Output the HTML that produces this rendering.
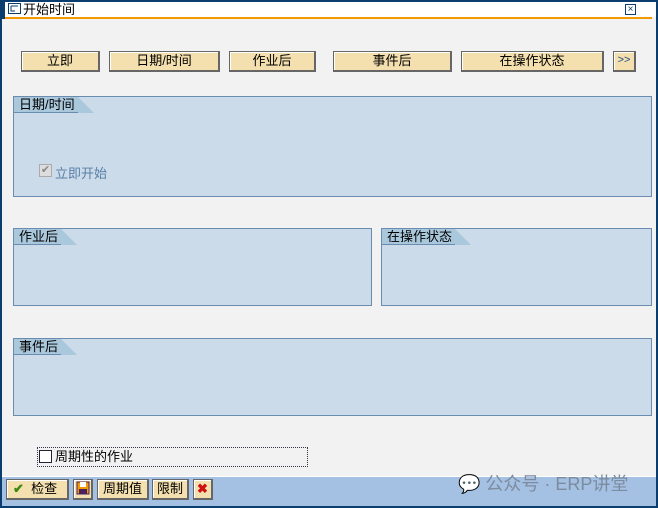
<!DOCTYPE html>
<html><head><meta charset="utf-8"><style>
*{box-sizing:border-box;margin:0;padding:0}
body{width:658px;height:508px;position:relative;overflow:hidden;background:#f2f2f2;font-family:"Liberation Sans","Noto Sans CJK SC",sans-serif;font-size:13px;color:#000}
.a{position:absolute}
.btn{position:absolute;background:#f4e0ae;border:1px solid #666;border-right:2px solid #666;border-bottom:2px solid #666;box-shadow:inset 1px 1px 0 #fff;text-align:center;line-height:17px;font-size:13px}
.grp{position:absolute;background:#cbdbea;border:1px solid #6a8cb0}
.tab{position:absolute;left:0;top:0;height:16px;background:#aac8dc;padding:0 3px 0 5px;line-height:16px;font-size:13px;border-bottom:1px solid #6a8cb0}
.tab:after{content:"";position:absolute;right:-16px;top:0;border-top:16px solid transparent;border-left:16px solid #aac8dc}
</style></head><body>
<div class="a" style="left:0;top:0;width:658px;height:2px;background:#0b3e6e"></div>
<div class="a" style="left:0;top:0;width:5px;height:19px;background:#0b3e6e"></div>
<div class="a" style="left:0;top:0;width:2px;height:508px;background:#0b3e6e"></div>
<div class="a" style="right:0;top:0;width:2px;height:508px;background:#0b3e6e"></div>
<div class="a" style="left:5px;top:2px;width:651px;height:15px;background:#fff"></div>
<div class="a" style="left:5px;top:17px;width:647px;height:2px;background:#f39a00"></div>
<div class="a" style="left:0;top:506px;width:658px;height:2px;background:#0b3e6e"></div>
<svg class="a" style="left:8px;top:3px" width="14" height="12"><rect x="0.5" y="0.5" width="12" height="10" fill="#fff" stroke="#0b3e6e"/><path d="M3 3h7M3 3v5h4" stroke="#0b3e6e" fill="none"/></svg>
<div class="a" style="left:23px;top:2px;line-height:15px">开始时间</div>
<div class="a" style="left:625px;top:4px;width:11px;height:11px;border:1px solid #0b3e6e;font-size:10px;line-height:9px;text-align:center;color:#0b3e6e">×</div>

<div class="btn" style="left:21px;top:51px;width:79px;height:21px">立即</div>
<div class="btn" style="left:109px;top:51px;width:111px;height:21px">日期/时间</div>
<div class="btn" style="left:229px;top:51px;width:87px;height:21px">作业后</div>
<div class="btn" style="left:333px;top:51px;width:119px;height:21px">事件后</div>
<div class="btn" style="left:461px;top:51px;width:143px;height:21px">在操作状态</div>
<div class="btn" style="left:613px;top:51px;width:23px;height:21px;font-size:11px;color:#1a4a8a">&gt;&gt;</div>

<div class="grp" style="left:13px;top:96px;width:639px;height:101px"><div class="tab">日期/时间</div>
<div class="a" style="left:25px;top:67px;width:13px;height:13px;border:1px solid #aaa;background:#ddd;color:#888;font-size:11px;line-height:11px;text-align:center">✔</div>
<div class="a" style="left:41px;top:66px;color:#5a7fa6">立即开始</div></div>
<div class="grp" style="left:13px;top:228px;width:359px;height:78px"><div class="tab">作业后</div></div>
<div class="grp" style="left:381px;top:228px;width:271px;height:78px"><div class="tab">在操作状态</div></div>
<div class="grp" style="left:13px;top:338px;width:639px;height:78px"><div class="tab">事件后</div></div>

<div class="a" style="left:37px;top:447px;width:271px;height:20px;border:1px dotted #334"></div>
<div class="a" style="left:39px;top:450px;width:13px;height:13px;border:1px solid #223;background:#fff"></div>
<div class="a" style="left:55px;top:449px;line-height:16px">周期性的作业</div>

<div class="a" style="left:2px;top:476px;width:654px;height:30px;background:#a4c0e2;border-top:1px solid #fff"></div>
<div class="btn" style="left:6px;top:479px;width:63px;height:21px;text-align:left;padding-left:6px"><span style="color:#3a8a10;font-weight:bold">✔</span>&nbsp; 检查</div>
<div class="btn" style="left:73px;top:479px;width:20px;height:21px"><svg width="14" height="14" style="margin-top:1px"><rect x="1" y="1" width="12" height="12" fill="#f39a00" stroke="#4a2060"/><rect x="4" y="1" width="6" height="5" fill="#fff"/><rect x="3" y="8" width="8" height="5" fill="#4a2060"/></svg></div>
<div class="btn" style="left:97px;top:479px;width:52px;height:21px">周期值</div>
<div class="btn" style="left:152px;top:479px;width:37px;height:21px">限制</div>
<div class="btn" style="left:193px;top:479px;width:20px;height:21px;color:#d01010;font-weight:bold">✖</div>
<div class="a" style="left:458px;top:470px;font-size:18px;color:#7c8ca0">💬 公众号 · ERP讲堂</div>
</body></html>
